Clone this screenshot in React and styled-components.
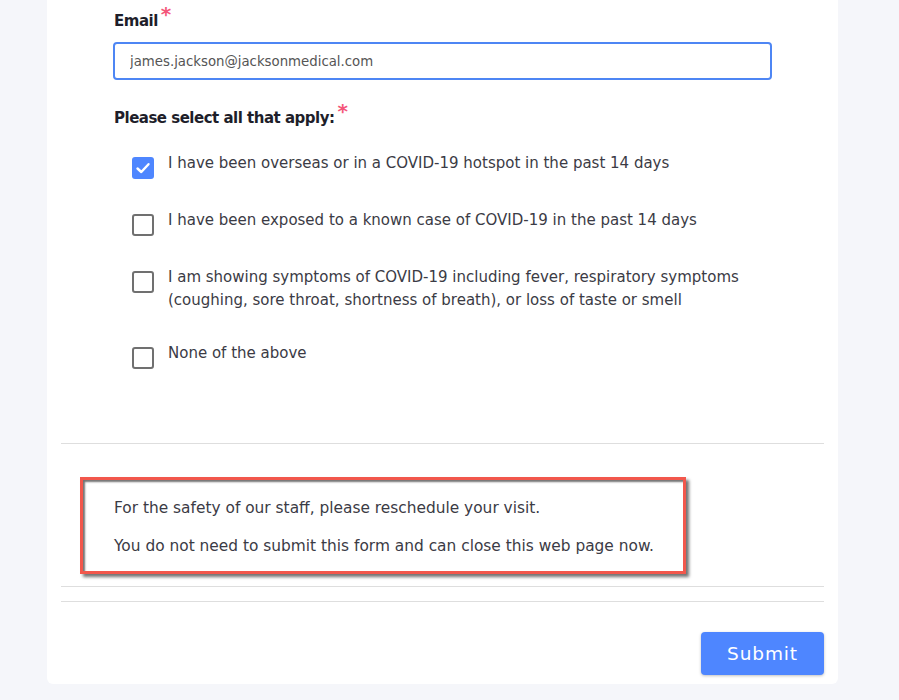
import React from 'react';
import styled, { createGlobalStyle } from 'styled-components';

const GlobalStyle = createGlobalStyle`
    body {
        margin: 0;
        background-color: #f5f6fa;
        font-family: 'DejaVu Sans', sans-serif;
    }
`;

const Page = styled.div`
    padding: 0 61px 16px 47px;
`;

const Card = styled.main`
    background-color: #fff;
    border-radius: 0 0 6px 6px;
    padding: 0 14px;
`;

const Fields = styled.section`
    padding: 11px 53px 74px;
`;

const Label = styled.div`
    font-size: 15px;
    font-weight: bold;
    color: #1e1e2a;
    line-height: 20px;
    letter-spacing: -0.5px;
    display: flex;
    align-items: flex-start;
`;

const Required = styled.span`
    color: #f4567a;
    font-size: 20px;
    line-height: 14px;
    margin-left: 3px;
    margin-top: -4px;
`;

const Input = styled.input`
    display: block;
    box-sizing: border-box;
    width: 659px;
    height: 38px;
    margin: 11px 0 28px -1px;
    padding: 0 15px;
    border: 2px solid #4e86f4;
    border-radius: 4px;
    font-family: 'DejaVu Sans', sans-serif;
    font-size: 13.3px;
    color: #555;
    outline: none;
`;

const Options = styled.div`
    display: flex;
    flex-direction: column;
    gap: 30px;
    margin: 24px 0 0 18px;
`;

const Option = styled.label`
    display: flex;
    gap: 14px;
    align-items: flex-start;
`;

const Box = styled.span`
    flex: none;
    box-sizing: border-box;
    width: 22px;
    height: 22px;
    margin-top: 5px;
    border-radius: 3px;
    border: ${p => (p.$checked ? 'none' : '2px solid #707070')};
    background-color: ${p => (p.$checked ? '#4e86ff' : '#fff')};
    display: flex;
    align-items: center;
    justify-content: center;
`;

const OptionText = styled.span`
    font-size: 15px;
    line-height: 23px;
    color: #3b3b45;
    max-width: 600px;
`;

const Divider = styled.hr`
    border: none;
    border-top: 1px solid #dedede;
    margin: 0;
`;

const Notice = styled.div`
    margin: 33px 138px 12px 19px;
    border: 3px solid #f2574c;
    padding: 17px 28px 13px 31px;
    box-shadow: 3px 3px 3px rgba(0, 0, 0, 0.55), inset 2px 2px 2px rgba(0, 0, 0, 0.55);
`;

const NoticeText = styled.p`
    margin: 0 0 15px;
    font-size: 15.4px;
    line-height: 23px;
    color: #3b3b45;
    &:last-child {
        margin-bottom: 0;
    }
`;

const Footer = styled.div`
    display: flex;
    justify-content: flex-end;
    padding: 30px 0 9px;
`;

const SubmitButton = styled.button`
    width: 123px;
    height: 43px;
    border: none;
    border-radius: 4px;
    background-color: #4e86ff;
    color: #fff;
    font-family: 'DejaVu Sans', sans-serif;
    font-size: 18.5px;
    font-weight: 500;
    letter-spacing: 0.9px;
    box-shadow: 0 1px 3px rgba(0, 0, 0, 0.25);
`;

const Check = () => (
    <svg width="16" height="16" viewBox="0 0 16 16">
        <path d="M2.5 8.5 L6.3 12 L13.5 4.2" fill="none" stroke="#fff" strokeWidth="2.4" strokeLinecap="round" strokeLinejoin="round" />
    </svg>
);

const options = [
    { text: 'I have been overseas or in a COVID-19 hotspot in the past 14 days', checked: true },
    { text: 'I have been exposed to a known case of COVID-19 in the past 14 days' },
    { text: 'I am showing symptoms of COVID-19 including fever, respiratory symptoms (coughing, sore throat, shortness of breath), or loss of taste or smell' },
    { text: 'None of the above' },
];

const App = () => {
    return (
        <Page>
            <GlobalStyle />
            <Card>
                <Fields>
                    <Label>Email<Required>*</Required></Label>
                    <Input defaultValue="james.jackson@jacksonmedical.com" readOnly />
                    <Label>Please select all that apply:<Required>*</Required></Label>
                    <Options>
                        {options.map(o => (
                            <Option key={o.text}>
                                <Box $checked={o.checked}>{o.checked && <Check />}</Box>
                                <OptionText>{o.text}</OptionText>
                            </Option>
                        ))}
                    </Options>
                </Fields>
                <Divider />
                <Notice>
                    <NoticeText>For the safety of our staff, please reschedule your visit.</NoticeText>
                    <NoticeText>You do not need to submit this form and can close this web page now.</NoticeText>
                </Notice>
                <Divider />
                <Divider style={{ marginTop: 14 }} />
                <Footer>
                    <SubmitButton>Submit</SubmitButton>
                </Footer>
            </Card>
        </Page>
    );
};

export default App;
